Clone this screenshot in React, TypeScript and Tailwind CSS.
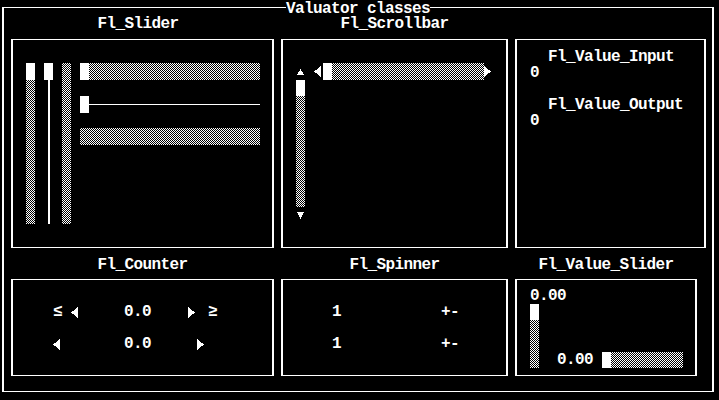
import React from "react";

// checkerboard dither used by FLTK text-mode sliders (stripes xor'ed by difference blend)
const D =
  "bg-[image:linear-gradient(90deg,#fff_1px,#000_1px),linear-gradient(#fff_1px,#000_1px)] bg-[length:2px_2px] bg-blend-difference";
const BOX = "border-x-2 border-y border-white";

function TriUp() {
  return (
    <svg width="7" height="6" viewBox="0 0 7 6" shapeRendering="crispEdges">
      <polygon points="3.5,0 7,6 0,6" fill="#fff" />
    </svg>
  );
}

function TriDown() {
  return (
    <svg width="7" height="7" viewBox="0 0 7 7" shapeRendering="crispEdges">
      <polygon points="0,0 7,0 3.5,7" fill="#fff" />
    </svg>
  );
}

function TriLeft() {
  return (
    <svg width="7" height="11" viewBox="0 0 7 11" shapeRendering="crispEdges">
      <polygon points="0,5.5 7,0 7,11" fill="#fff" />
    </svg>
  );
}

function TriRight() {
  return (
    <svg width="7" height="11" viewBox="0 0 7 11" shapeRendering="crispEdges">
      <polygon points="0,0 7,5.5 0,11" fill="#fff" />
    </svg>
  );
}

function SliderPanel() {
  return (
    <div className={`${BOX} h-[209px] pl-[13px] pt-[23px] flex gap-[9px]`}>
      {/* vertical sliders */}
      <div className="w-[9px] h-[161px] flex flex-col">
        <div className="h-[17px] bg-white" />
        <div className={`flex-1 ${D}`} />
      </div>
      <div className="w-[9px] h-[161px] flex flex-col items-center">
        <div className="w-[9px] h-[17px] bg-white" />
        <div className="w-[2px] flex-1 bg-white" />
      </div>
      <div className={`w-[9px] h-[161px] ${D}`} />

      {/* horizontal sliders */}
      <div className="w-[180px] flex flex-col">
        <div className="h-[17px] flex">
          <div className="w-[9px] bg-white" />
          <div className={`flex-1 ${D}`} />
        </div>
        <div className="mt-[16px] h-[17px] flex items-center">
          <div className="w-[9px] h-[17px] bg-white" />
          <div className="flex-1 h-px bg-white" />
        </div>
        <div className={`mt-[15px] h-[17px] ${D}`} />
      </div>
    </div>
  );
}

function ScrollbarPanel() {
  return (
    <div className={`${BOX} h-[209px] pl-[13px] pt-[23px] flex`}>
      <div className="w-[9px] h-[161px] flex flex-col">
        <div className="h-[17px] flex items-center justify-center">
          <TriUp />
        </div>
        <div className="h-[16px] bg-white" />
        <div className={`flex-1 ${D}`} />
        <div className="h-[17px] flex items-center justify-center">
          <TriDown />
        </div>
      </div>
      <div className="ml-[9px] h-[17px] flex items-center">
        <TriLeft />
        <div className="ml-[2px] w-[9px] h-full bg-white" />
        <div className={`w-[152px] h-full ${D}`} />
        <TriRight />
      </div>
    </div>
  );
}

function ValueInputPanel() {
  return (
    <div className={`${BOX} h-[209px] pl-[13px] pt-[9px]`}>
      <div className="pl-[18px]">Fl_Value_Input</div>
      <div>0</div>
      <div className="mt-4 pl-[18px]">Fl_Value_Output</div>
      <div>0</div>
    </div>
  );
}

function CounterPanel() {
  return (
    <div className={`${BOX} h-[97px] pl-[40px] pt-[24px]`}>
      <div className="h-4 flex items-center">
        <span className="w-[18px]">≤</span>
        <span className="w-[53px] flex"><TriLeft /></span>
        <span className="w-[64px]">0.0</span>
        <span className="w-[20px] flex"><TriRight /></span>
        <span>≥</span>
      </div>
      <div className="mt-4 h-4 flex items-center">
        <span className="w-[71px] flex"><TriLeft /></span>
        <span className="w-[73px]">0.0</span>
        <span className="flex"><TriRight /></span>
      </div>
    </div>
  );
}

function SpinnerPanel() {
  return (
    <div className={`${BOX} h-[97px] pl-[49px] pt-[24px]`}>
      <div className="h-4 flex">
        <span className="w-[109px]">1</span>
        <span>+-</span>
      </div>
      <div className="mt-4 h-4 flex">
        <span className="w-[109px]">1</span>
        <span>+-</span>
      </div>
    </div>
  );
}

function ValueSliderPanel() {
  return (
    <div className={`${BOX} h-[97px] pl-[13px] pt-[9px] flex items-end pb-[7px]`}>
      <div className="w-[9px] flex flex-col">
        <div className="h-[15px] leading-[15px] whitespace-nowrap">0.00</div>
        <div className="w-[9px] h-[64px] flex flex-col">
          <div className="h-[16px] bg-white" />
          <div className={`flex-1 ${D}`} />
        </div>
      </div>
      <div className="ml-[18px] h-[16px] flex items-center">
        <span className="w-[36px]">0.00</span>
        <div className="ml-[9px] w-[81px] h-[16px] flex">
          <div className="w-[9px] bg-white" />
          <div className={`flex-1 ${D}`} />
        </div>
      </div>
    </div>
  );
}

export default function App() {
  return (
    <div className="w-[719px] h-[400px] bg-black text-white font-['Liberation_Mono',monospace] font-bold text-[16px] leading-4 tracking-[-0.6px] overflow-hidden pt-[7px] pl-[2px]">
      <div className="relative w-[712px] h-[385px] border-x-2 border-y border-white pt-[8px] pl-[7px]">
        {/* group title sits over the frame line */}
        <div className="absolute -top-[6px] left-1/2 -translate-x-1/2 bg-black whitespace-nowrap leading-[14px]">
          Valuator classes
        </div>

        <div className="flex gap-[7px]">
          <div className="w-[263px]">
            <div className="h-4 text-center pr-[9px]">Fl_Slider</div>
            <div className="mt-[7px]">
              <SliderPanel />
            </div>
          </div>
          <div className="w-[227px]">
            <div className="h-4 text-center">Fl_Scrollbar</div>
            <div className="mt-[7px]">
              <ScrollbarPanel />
            </div>
          </div>
          <div className="w-[191px]">
            <div className="h-4" />
            <div className="mt-[7px]">
              <ValueInputPanel />
            </div>
          </div>
        </div>

        <div className="mt-[9px] flex gap-[7px]">
          <div className="w-[263px]">
            <div className="h-4 text-center">Fl_Counter</div>
            <div className="mt-[6px]">
              <CounterPanel />
            </div>
          </div>
          <div className="w-[227px]">
            <div className="h-4 text-center">Fl_Spinner</div>
            <div className="mt-[6px]">
              <SpinnerPanel />
            </div>
          </div>
          <div className="w-[182px]">
            <div className="h-4 text-center">Fl_Value_Slider</div>
            <div className="mt-[6px]">
              <ValueSliderPanel />
            </div>
          </div>
        </div>
      </div>
    </div>
  );
}
